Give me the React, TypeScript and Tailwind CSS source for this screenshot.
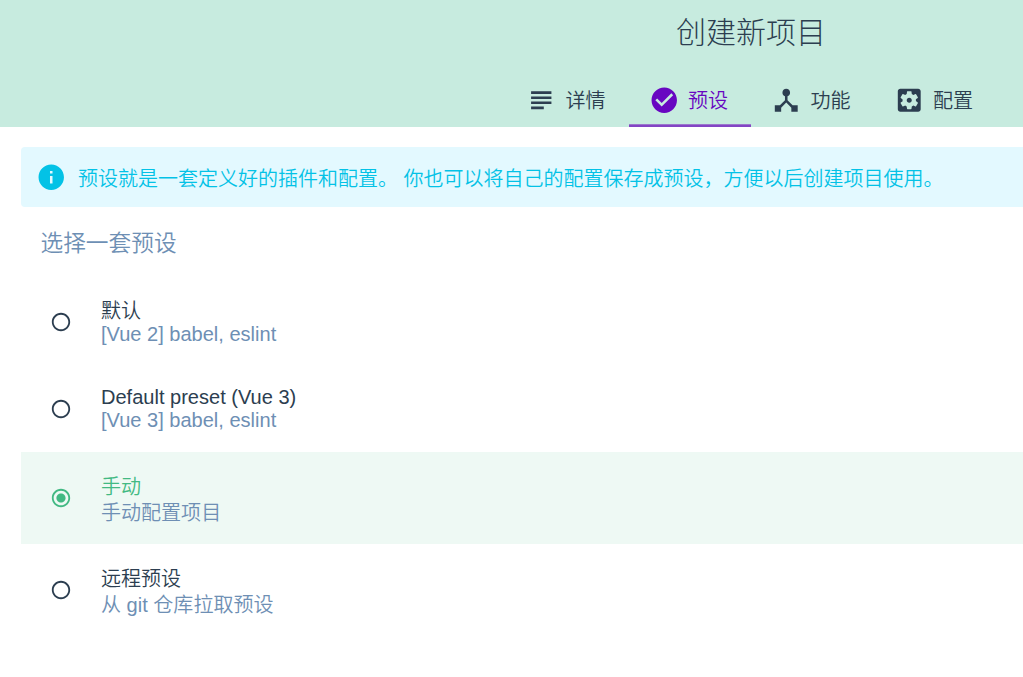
import React, { useState } from "react";
import {
  MdCheckCircle,
  MdDeviceHub,
  MdInfo,
  MdRadioButtonChecked,
  MdRadioButtonUnchecked,
  MdSubject,
} from "react-icons/md";

interface IconProps {
  className?: string;
}

interface Tab {
  id: string;
  label: string;
  icon: React.ComponentType<IconProps>;
}

interface Preset {
  id: string;
  name: string;
  description: string;
  nameClass: string;
  descriptionClass: string;
}

const ConfigIcon: React.FC<IconProps> = ({ className }) => (
  <svg viewBox="0 0 24 24" fill="currentColor" className={className}>
    <path d="M12 10c-1.1 0-2 .9-2 2s.9 2 2 2 2-.9 2-2-.9-2-2-2zm7-7H5c-1.11 0-2 .9-2 2v14c0 1.1.89 2 2 2h14c1.11 0 2-.9 2-2V5c0-1.1-.89-2-2-2zm-1.75 9c0 .23-.02.46-.05.68l1.48 1.16c.13.11.17.3.08.45l-1.4 2.42c-.09.15-.27.21-.43.15l-1.74-.7c-.36.28-.76.51-1.18.69l-.26 1.85c-.03.17-.18.3-.35.3h-2.8c-.17 0-.32-.13-.35-.29l-.26-1.85c-.43-.18-.82-.41-1.18-.69l-1.74.7c-.16.06-.34 0-.43-.15l-1.4-2.42c-.09-.15-.05-.34.08-.45l1.48-1.16c-.03-.23-.05-.46-.05-.69 0-.23.02-.46.05-.68l-1.48-1.16c-.13-.11-.17-.3-.08-.45l1.4-2.42c.09-.15.27-.21.43-.15l1.74.7c.36-.28.76-.51 1.18-.69l.26-1.85c.03-.17.18-.3.35-.3h2.8c.17 0 .32.13.35.29l.26 1.85c.43.18.82.41 1.18.69l1.74-.7c.16-.06.34 0 .43.15l1.4 2.42c.09.15.05.34-.08.45l-1.48 1.16c.03.23.05.46.05.69z" />
  </svg>
);

const tabs: Tab[] = [
  { id: "details", label: "详情", icon: MdSubject },
  { id: "presets", label: "预设", icon: MdCheckCircle },
  { id: "features", label: "功能", icon: MdDeviceHub },
  { id: "config", label: "配置", icon: ConfigIcon },
];

// Lines with Chinese text are a bit taller than the latin ones
const presets: Preset[] = [
  {
    id: "default",
    name: "默认",
    description: "[Vue 2] babel, eslint",
    nameClass: "pt-[3px] leading-[23px]",
    descriptionClass: "leading-[23px]",
  },
  {
    id: "default-vue-3",
    name: "Default preset (Vue 3)",
    description: "[Vue 3] babel, eslint",
    nameClass: "leading-[23px]",
    descriptionClass: "leading-[23px]",
  },
  {
    id: "manual",
    name: "手动",
    description: "手动配置项目",
    nameClass: "pt-[3px] leading-[25px]",
    descriptionClass: "leading-6 pt-px -mb-px",
  },
  {
    id: "remote",
    name: "远程预设",
    description: "从 git 仓库拉取预设",
    nameClass: "pt-[3px] leading-[25px]",
    descriptionClass: "leading-6 pt-px -mb-px",
  },
];

const App: React.FC = () => {
  const [activeTab, setActiveTab] = useState("presets");
  const [selected, setSelected] = useState("manual");

  return (
    <div className="h-screen overflow-hidden bg-white font-['Liberation_Sans','Noto_Sans_CJK_SC',sans-serif] text-[20.05px] font-[350] text-[#2c3e50]">
      {/* Header */}
      <header className="flex h-[127px] flex-col justify-between bg-[#c7ebdf]">
        <h1 className="pt-[10px] pl-[676px] text-[30px] leading-[46px] font-light whitespace-nowrap">
          创建新项目
        </h1>
        <nav className="flex pl-[506px]">
          {tabs.map(({ id, label, icon: Icon }) => (
            <button
              key={id}
              onClick={() => setActiveTab(id)}
              className={`flex h-[54px] w-[122.5px] items-center border-b-2 pt-[2px] pl-[20px] ${
                id === activeTab
                  ? "border-[#8345c4] text-[#6806c1] shadow-[inset_0_-1px_0_#9a77cc]"
                  : "border-transparent"
              }`}
            >
              <Icon className="size-[30.5px]" />
              <span className="ml-[9px] pt-[3px]">{label}</span>
            </button>
          ))}
        </nav>
      </header>

      <main className="pt-5 pl-[21px]">
        {/* Info banner */}
        <div className="flex h-[60px] items-center rounded-l bg-[#e3f9ff] pl-[15px] text-[#03c2e6]">
          <MdInfo className="size-[30.5px]" />
          <span className="ml-[11.5px] pt-1 text-[20px] whitespace-nowrap">
            {"预设就是一套定义好的插件和配置。 你也可以将自己的配置保存成预设\uFF0C方便以后创建项目使用。"}
          </span>
        </div>

        <h2 className="pt-[19px] pb-[17px] pl-[19.5px] text-[22.7px] leading-[34px] text-[#6e8fb4]">
          选择一套预设
        </h2>

        {/* Presets */}
        <div>
          {presets.map((preset) => {
            const isSelected = preset.id === selected;
            const Radio = isSelected
              ? MdRadioButtonChecked
              : MdRadioButtonUnchecked;

            return (
              <div
                key={preset.id}
                onClick={() => setSelected(preset.id)}
                className={`flex items-center py-5 pl-[29px] ${
                  isSelected ? "bg-[#eef9f4]" : ""
                }`}
              >
                <Radio
                  className={`size-[22px] ${isSelected ? "text-[#42b983]" : ""}`}
                />
                <div className="ml-[29px]">
                  <div
                    className={`${preset.nameClass} ${
                      isSelected ? "text-[#42b983]" : ""
                    }`}
                  >
                    {preset.name}
                  </div>
                  <div className={`text-[#6e8fb4] ${preset.descriptionClass}`}>
                    {preset.description}
                  </div>
                </div>
              </div>
            );
          })}
        </div>
      </main>
    </div>
  );
};

export default App;
